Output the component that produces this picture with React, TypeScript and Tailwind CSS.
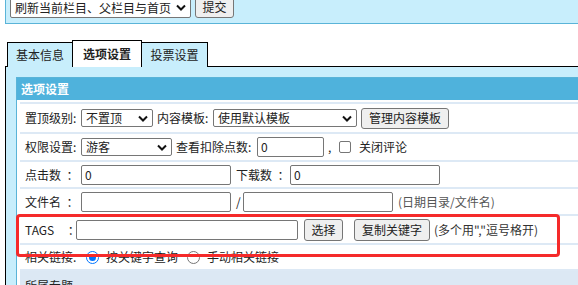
import React from 'react';

const font = 'font-["Microsoft_YaHei","Noto_Sans_CJK_SC",sans-serif]';

function Chevron() {
  return (
    <svg width="10" height="7" viewBox="0 0 10 7" className="shrink-0">
      <polyline points="1,1.5 5,5.5 9,1.5" fill="none" stroke="#111" strokeWidth="2" />
    </svg>
  );
}

function Select({ value, className }: { value: string; className: string }) {
  return (
    <div
      className={`flex items-center justify-between rounded-[2px] border border-[#767676] bg-white pl-[4px] pr-[4px] ${className}`}
    >
      <span className="whitespace-nowrap leading-none">{value}</span>
      <Chevron />
    </div>
  );
}

function Input({ value = '', className }: { value?: string; className: string }) {
  return (
    <div
      className={`flex h-[20px] items-center rounded-[2px] border border-[#767676] bg-white pl-[3px] ${className}`}
    >
      <span className="leading-none">{value}</span>
    </div>
  );
}

function Btn({ label, className }: { label: string; className: string }) {
  return (
    <div
      className={`flex items-center justify-center rounded-[3px] border border-[#767676] bg-[#efefef] leading-none ${className}`}
    >
      {label}
    </div>
  );
}

function Radio({ checked }: { checked?: boolean }) {
  return checked ? (
    <span className="flex h-[13px] w-[13px] items-center justify-center rounded-full border-[1.5px] border-[#0075ff] bg-white">
      <span className="h-[7px] w-[7px] rounded-full bg-[#0075ff]" />
    </span>
  ) : (
    <span className="h-[13px] w-[13px] rounded-full border border-[#767676] bg-white" />
  );
}

export default function App() {
  return (
    <div className={`relative h-[285px] w-[578px] overflow-hidden bg-white text-[12px] text-[#222] ${font}`}>
      {/* top action bar */}
      <div className="ml-[5px] flex h-[24px] w-[700px] items-end gap-[4px] overflow-hidden border-b border-l border-[#5ab4d8] bg-[#c8eefc] pb-[5px] pl-[4px]">
        <Select value="刷新当前栏目、父栏目与首页" className="h-[21px] w-[181px]" />
        <Btn label="提交" className="h-[22px] w-[39px]" />
      </div>

      {/* tabs */}
      <div className="mt-[16px] flex h-[26px] items-end pl-[7px]">
        <div className="relative z-10 -mb-px flex h-[25px] w-[66px] items-center justify-center border border-b-0 border-black bg-[#c8eefc]">
          基本信息
        </div>
        <div className="relative z-10 -mb-px -ml-px flex h-[27px] w-[70px] items-center justify-center border border-b-0 border-black bg-white font-bold">
          选项设置
        </div>
        <div className="relative z-10 -mb-px -ml-px flex h-[25px] w-[67px] items-center justify-center border border-b-0 border-black bg-[#c8eefc]">
          投票设置
        </div>
      </div>

      {/* panel */}
      <div className="ml-[5px] h-[300px] w-[700px] border-l border-t border-black bg-[#c8eefc] pl-[10px] pt-[10px]">
        <div className="w-[680px] border border-[#5ab4d8] bg-white">
          <div className="flex h-[22px] items-center bg-[#4fb2dc] pl-[4px] font-bold text-white">选项设置</div>
          <div className="ml-[3px] mt-[2px] flex flex-col gap-[2px] bg-[#dde9f5] pt-[2px]">
            <div className="flex h-[28px] items-center bg-white pl-[5px]">
              <span className="w-[56px]">置顶级别:</span>
              <Select value="不置顶" className="h-[18px] w-[72px]" />
              <span className="ml-[4px] w-[56px]">内容模板:</span>
              <Select value="使用默认模板" className="h-[18px] w-[144px]" />
              <Btn label="管理内容模板" className="ml-[4px] h-[21px] w-[88px]" />
            </div>
            <div className="flex h-[26px] items-center bg-white pl-[5px]">
              <span className="w-[56px]">权限设置:</span>
              <Select value="游客" className="h-[18px] w-[91px]" />
              <span className="ml-[4px] w-[81px]">查看扣除点数:</span>
              <Input value="0" className="w-[67px]" />
              <span className="ml-[4px] w-[11px]">,</span>
              <span className="h-[12px] w-[12px] rounded-[2px] border border-[#767676] bg-white" />
              <span className="ml-[8px]">关闭评论</span>
            </div>
            <div className="flex h-[25px] items-center bg-white pl-[5px]">
              <span className="w-[56px] whitespace-pre">点击数  ：</span>
              <Input value="0" className="w-[150px]" />
              <span className="ml-[5px] w-[54px] whitespace-pre">下载数  ：</span>
              <Input value="0" className="w-[150px]" />
            </div>
            <div className="flex h-[25px] items-center bg-white pl-[5px]">
              <span className="w-[56px] whitespace-pre">文件名  ：</span>
              <Input className="w-[150px]" />
              <span className="ml-[5px] w-[7px]">/</span>
              <Input className="w-[150px]" />
              <span className="ml-[5px] text-[#555]">(日期目录/文件名)</span>
            </div>
            <div className="flex h-[27px] items-center bg-white pl-[5px]">
              <span className="w-[51px] whitespace-pre">TAGS     ：</span>
              <Input className="w-[222px]" />
              <Btn label="选择" className="ml-[6px] h-[22px] w-[39px]" />
              <Btn label="复制关键字" className="ml-[11px] h-[22px] w-[76px]" />
              <span className="ml-[4px] text-[#333]">(多个用","逗号格开)</span>
            </div>
            <div className="flex h-[24px] items-center bg-white pl-[5px]">
              <span className="w-[61px]">相关链接:</span>
              <Radio checked />
              <span className="ml-[7px] w-[81px]">按关键字查询</span>
              <Radio />
              <span className="ml-[7px]">手动相关链接</span>
            </div>
            <div className="flex h-[30px] items-center bg-[#dce8f4] pl-[5px]">所属专题</div>
          </div>
        </div>
      </div>

      {/* red highlight annotation */}
      <div className="absolute left-[16px] top-[214px] h-[43px] w-[544px] rounded-[4px] border-[3px] border-[#f52a2a]" />
    </div>
  );
}
